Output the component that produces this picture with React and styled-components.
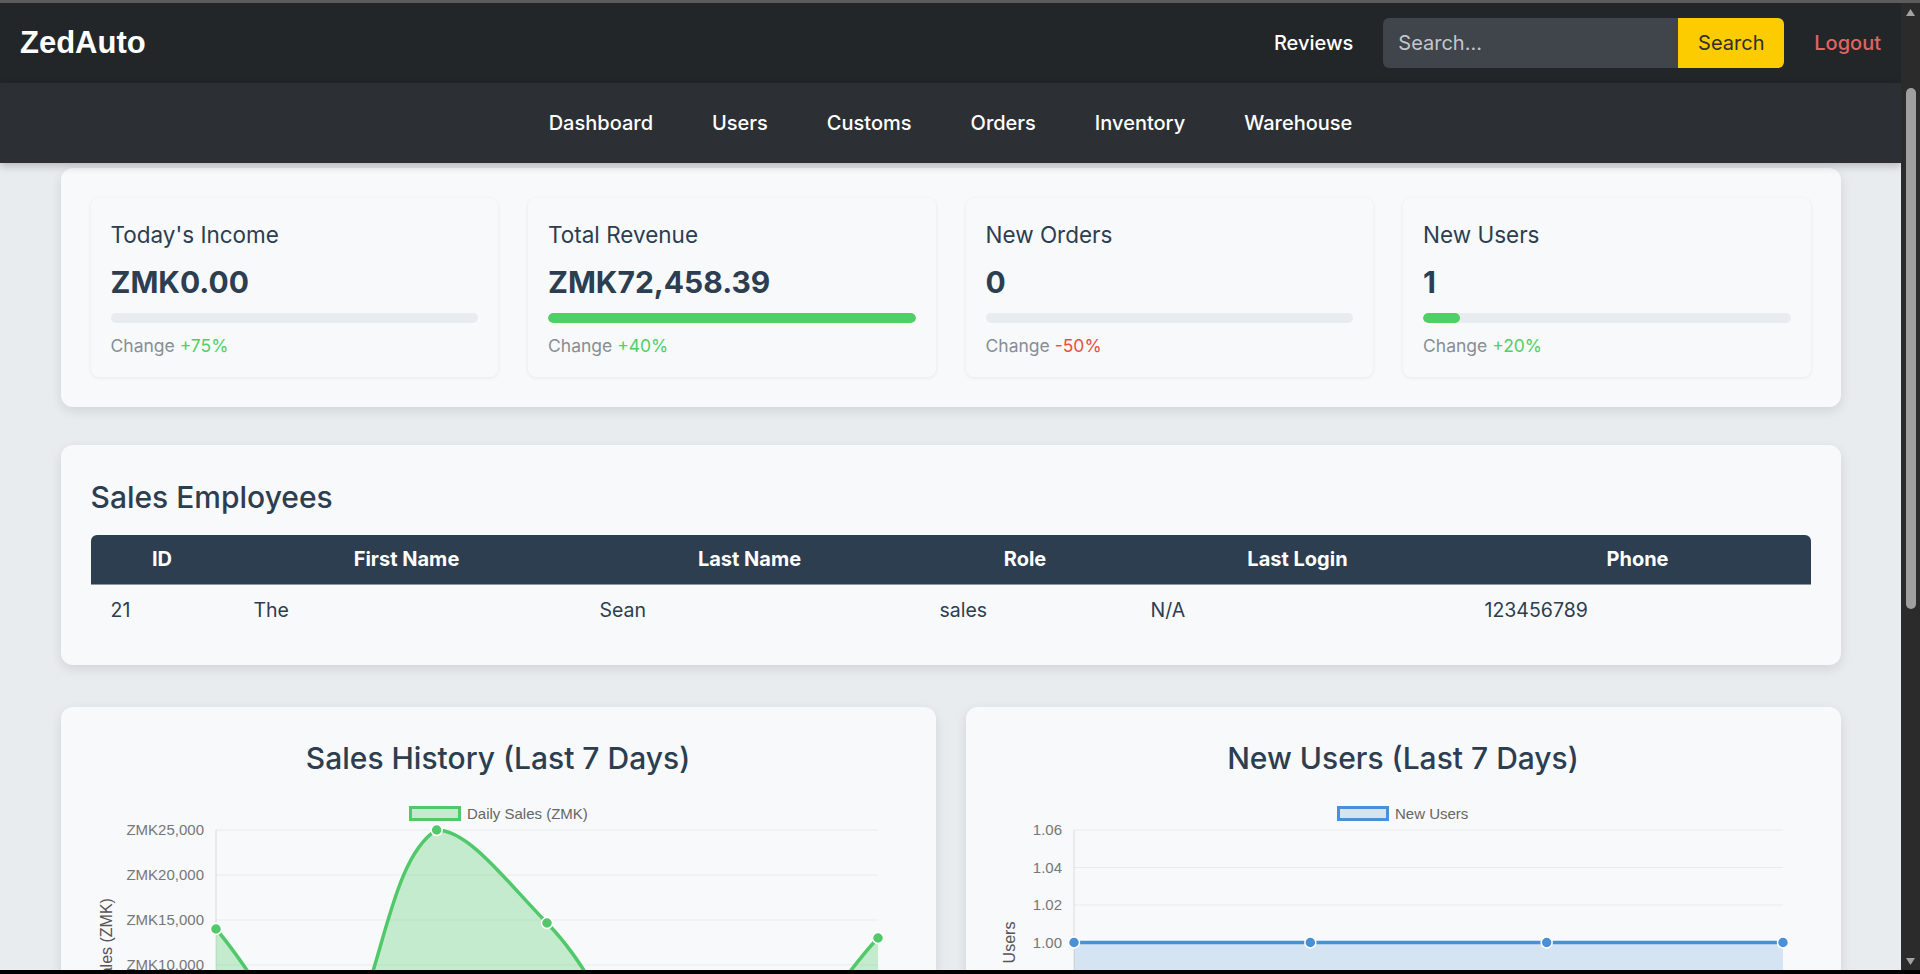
import React from 'react'
import styled, { createGlobalStyle, css } from 'styled-components'

const GlobalStyle = createGlobalStyle`
  * { box-sizing: border-box; }
  html, body {
    margin: 0;
    height: 100%;
    overflow: hidden;
  }
  body {
    font-family: Inter, "Noto Sans", sans-serif;
    background: #000;
  }
  #root { height: 100%; }
`

const Frame = styled.div`
  height: 100vh;
  display: flex;
  flex-direction: column;
`
const TopLine = styled.div`
  height: 3px;
  background: #5c5c5c;
  flex-shrink: 0;
`
const BottomLine = styled.div`
  height: 4px;
  background: #000;
  flex-shrink: 0;
`
const Middle = styled.div`
  flex: 1;
  min-height: 0;
  display: flex;
`
const Viewport = styled.div`
  flex: 1;
  overflow: hidden;
  background: #e9ecef;
`

/* fake window scrollbar */
const Rail = styled.div`
  width: 19px;
  background: #2b2b2b;
  display: flex;
  flex-direction: column;
  align-items: center;
  flex-shrink: 0;
`
const RailArrow = styled.div`
  height: 18px;
  display: flex;
  align-items: center;
  justify-content: center;
`
const RailTrack = styled.div`
  flex: 1;
  display: flex;
  flex-direction: column;
  align-items: center;
`
const Thumb = styled.div`
  width: 10px;
  border-radius: 5px;
  background: #9f9f9f;
  margin-top: 67px;
  height: 521px;
`

const Header = styled.header`
  height: 80px;
  background: #232629;
  display: flex;
  align-items: center;
  justify-content: space-between;
  padding: 0 20px;
`
const Logo = styled.div`
  font-family: "Liberation Sans", Arial, sans-serif;
  font-weight: 700;
  font-size: 31px;
  color: #fff;
`
const HeaderRight = styled.div`
  display: flex;
  align-items: center;
  gap: 30px;
`
const HeaderLink = styled.a`
  font-size: 20px;
  font-weight: 500;
  color: ${(p) => (p.danger ? '#e06464' : '#fff')};
  text-decoration: none;
`
const SearchForm = styled.form`
  display: flex;
  height: 50px;
  margin: 0;
`
const SearchInput = styled.input`
  width: 295px;
  height: 100%;
  border: none;
  outline: none;
  background: #40444b;
  color: #fff;
  font-family: inherit;
  font-size: 20px;
  padding: 0 15px;
  border-radius: 6px 0 0 6px;
  &::placeholder { color: #c2c6cd; }
`
const SearchButton = styled.button`
  width: 106px;
  height: 100%;
  border: none;
  background: #fccb00;
  color: #2f2f2f;
  font-family: inherit;
  font-size: 20px;
  border-radius: 0 6px 6px 0;
`

const Nav = styled.nav`
  height: 80px;
  background: #2c2f33;
  display: flex;
  align-items: center;
  justify-content: center;
  gap: 59px;
  position: relative;
  z-index: 1;
  box-shadow: 0 3px 8px rgba(0, 0, 0, 0.22);
`
const NavLink = styled.a`
  font-size: 20px;
  font-weight: 500;
  color: #fff;
  text-decoration: none;
`

const Content = styled.main`
  max-width: 1780px;
  margin: 0 auto;
  padding-top: 5px;
`
const Panel = styled.section`
  background: #f8f9fa;
  border-radius: 12px;
  box-shadow: 0 4px 12px rgba(0, 0, 0, 0.1);
  padding: ${(p) => p.pad || '30px'};
  margin-bottom: ${(p) => p.gap || '0'};
`
const StatsGrid = styled.div`
  display: grid;
  grid-template-columns: repeat(4, 1fr);
  gap: 30px;
`
const StatCard = styled.div`
  background: #f8f9fa;
  border-radius: 8px;
  box-shadow: 0 1px 4px rgba(0, 0, 0, 0.07);
  padding: 23px 20px 20px;
`
const StatTitle = styled.div`
  font-size: 22.5px;
  line-height: 28px;
  color: #2c3e50;
`
const StatValue = styled.div`
  font-size: 30px;
  line-height: 36px;
  font-weight: 700;
  color: #2c3e50;
  margin-top: 15px;
`
const Bar = styled.div`
  height: 10px;
  border-radius: 5px;
  background: #e9ecef;
  margin-top: 13px;
  overflow: hidden;
`
const BarFill = styled.div`
  height: 100%;
  border-radius: 5px;
  background: #51cf66;
`
const Change = styled.div`
  font-size: 17.5px;
  line-height: 22px;
  color: #868e96;
  margin-top: 12px;
`
const Delta = styled.span`
  color: ${(p) => (p.up ? '#51cf66' : '#e8503a')};
`

const SectionTitle = styled.h2`
  margin: 4px 0 20px;
  font-size: 30px;
  line-height: 36px;
  font-weight: 500;
  color: #2c3e50;
  ${(p) =>
    p.center &&
    css`
      text-align: center;
      margin: 0 0 13px;
    `}
`
const Table = styled.table`
  width: 100%;
  border-collapse: separate;
  border-spacing: 0;
  table-layout: fixed;
`
const Th = styled.th`
  background: #2c3e50;
  color: #fff;
  font-size: 20px;
  line-height: 25px;
  font-weight: 700;
  padding: 12px 20px;
  text-align: center;
  border-bottom: 1px solid #8d97a1;
  &:first-child { border-top-left-radius: 6px; }
  &:last-child { border-top-right-radius: 6px; }
`
const Td = styled.td`
  font-size: 19.5px;
  line-height: 24px;
  color: #2c3e50;
  padding: 13px 20px;
  text-align: left;
`

const ChartsRow = styled.div`
  display: grid;
  grid-template-columns: 1fr 1fr;
  gap: 30px;
`
const ChartSvg = styled.svg`
  display: block;
  width: 100%;
  height: 300px;
  font-family: "Liberation Sans", Arial, sans-serif;
`

const stats = [
  { title: "Today's Income", value: 'ZMK0.00', fill: 0, change: '+75%', up: true },
  { title: 'Total Revenue', value: 'ZMK72,458.39', fill: 100, change: '+40%', up: true },
  { title: 'New Orders', value: '0', fill: 0, change: '-50%', up: false },
  { title: 'New Users', value: '1', fill: 10, change: '+20%', up: true }
]

const navItems = ['Dashboard', 'Users', 'Customs', 'Orders', 'Inventory', 'Warehouse']
const columns = ['ID', 'First Name', 'Last Name', 'Role', 'Last Login', 'Phone']
const colWidths = [143, 346, 340, 211, 334, 346]
const employees = [{ id: 21, first: 'The', last: 'Sean', role: 'sales', login: 'N/A', phone: '123456789' }]

// chart.js style spline (tension, control points capped to the area)
const splinePath = (pts, t, minY, maxY) => {
  const clamp = (y) => Math.max(minY, Math.min(maxY, y))
  const cps = pts.map((p, i) => {
    const prev = pts[i - 1] || p
    const next = pts[i + 1] || p
    const d01 = Math.hypot(p.x - prev.x, p.y - prev.y)
    const d12 = Math.hypot(next.x - p.x, next.y - p.y)
    const s01 = d01 / (d01 + d12) || 0
    const s12 = d12 / (d01 + d12) || 0
    return {
      a: { x: p.x - t * s01 * (next.x - prev.x), y: clamp(p.y - t * s01 * (next.y - prev.y)) },
      b: { x: p.x + t * s12 * (next.x - prev.x), y: clamp(p.y + t * s12 * (next.y - prev.y)) }
    }
  })
  let d = `M${pts[0].x},${pts[0].y}`
  for (let i = 1; i < pts.length; i++) {
    d += ` C${cps[i - 1].b.x},${cps[i - 1].b.y} ${cps[i].a.x},${cps[i].a.y} ${pts[i].x},${pts[i].y}`
  }
  return d
}

const LineChart = ({ data, min, max, ticks, left, legend, legendX, axisTitle, titleX, color, fill, curve }) => {
  const top = 41
  const bottom = 266
  const right = 787
  const step = (right - left) / (data.length - 1)
  const toY = (v) => bottom - ((v - min) / (max - min)) * (bottom - top)
  const pts = data.map((v, i) => ({ x: left + i * step, y: toY(v) }))
  const line = curve
    ? splinePath(pts, 0.4, top, bottom)
    : pts.map((p, i) => `${i ? 'L' : 'M'}${p.x},${p.y}`).join(' ')
  const area = `${line} L${pts[pts.length - 1].x},${bottom} L${pts[0].x},${bottom} Z`
  return (
    <ChartSvg viewBox='0 0 815 300' preserveAspectRatio='xMinYMin meet'>
      <rect x={legendX + 1.5} y='18.5' width='49' height='12' fill={fill} stroke={color} strokeWidth='3' />
      <text x={legendX + 58} y='30' fontSize='15' fill='#666'>{legend}</text>
      {ticks.map((tk) => (
        <g key={tk.label}>
          <line x1={left} x2={right} y1={toY(tk.v)} y2={toY(tk.v)} stroke='rgba(0,0,0,0.06)' />
          <text x={left - 12} y={toY(tk.v) + 5} fontSize='15' fill='#777' textAnchor='end'>{tk.label}</text>
        </g>
      ))}
      <line x1={left} x2={left} y1={top} y2={bottom} stroke='rgba(0,0,0,0.12)' />
      <path d={area} fill={fill} />
      <path d={line} fill='none' stroke={color} strokeWidth='3.5' />
      {pts.map((p, i) => (
        <circle key={i} cx={p.x} cy={p.y} r='5.5' fill={color} stroke='#fff' strokeWidth='1.5' />
      ))}
      <text
        transform={`translate(${titleX}, ${(top + bottom) / 2}) rotate(-90)`}
        fontSize='16'
        fill='#555'
        textAnchor='middle'
        dominantBaseline='central'
      >
        {axisTitle}
      </text>
    </ChartSvg>
  )
}

const salesTicks = [25000, 20000, 15000, 10000, 5000, 0].map((v) => ({
  v,
  label: `ZMK${v.toLocaleString('en-US')}`
}))
const userTicks = [1.06, 1.04, 1.02, 1.0, 0.98, 0.96, 0.94].map((v) => ({ v, label: v.toFixed(2) }))

const ArrowIcon = ({ down }) => (
  <svg width='9' height='7' viewBox='0 0 9 7'>
    <polygon points={down ? '0,0 9,0 4.5,7' : '0,7 9,7 4.5,0'} fill='#a3a3a3' />
  </svg>
)

const App = () => {
  return (
    <Frame>
      <GlobalStyle />
      <TopLine />
      <Middle>
        <Viewport>
          <Header>
            <Logo>ZedAuto</Logo>
            <HeaderRight>
              <HeaderLink href='#'>Reviews</HeaderLink>
              <SearchForm onSubmit={(e) => e.preventDefault()}>
                <SearchInput placeholder='Search...' />
                <SearchButton type='submit'>Search</SearchButton>
              </SearchForm>
              <HeaderLink href='#' danger>Logout</HeaderLink>
            </HeaderRight>
          </Header>
          <Nav>
            {navItems.map((n) => (
              <NavLink key={n} href='#'>{n}</NavLink>
            ))}
          </Nav>
          <Content>
            <Panel gap='38px'>
              <StatsGrid>
                {stats.map((s) => (
                  <StatCard key={s.title}>
                    <StatTitle>{s.title}</StatTitle>
                    <StatValue>{s.value}</StatValue>
                    <Bar>
                      <BarFill style={{ width: `${s.fill}%` }} />
                    </Bar>
                    <Change>
                      Change <Delta up={s.up}>{s.change}</Delta>
                    </Change>
                  </StatCard>
                ))}
              </StatsGrid>
            </Panel>
            <Panel gap='42px'>
              <SectionTitle>Sales Employees</SectionTitle>
              <Table>
                <colgroup>
                  {colWidths.map((w, i) => (
                    <col key={i} style={{ width: w }} />
                  ))}
                </colgroup>
                <thead>
                  <tr>
                    {columns.map((c) => (
                      <Th key={c}>{c}</Th>
                    ))}
                  </tr>
                </thead>
                <tbody>
                  {employees.map((e) => (
                    <tr key={e.id}>
                      <Td>{e.id}</Td>
                      <Td>{e.first}</Td>
                      <Td>{e.last}</Td>
                      <Td>{e.role}</Td>
                      <Td>{e.login}</Td>
                      <Td>{e.phone}</Td>
                    </tr>
                  ))}
                </tbody>
              </Table>
            </Panel>
            <ChartsRow>
              <Panel pad='32.5px 30px 30px'>
                <SectionTitle center>Sales History (Last 7 Days)</SectionTitle>
                <LineChart
                  data={[14000, 0, 25000, 14667, 0, 0, 13000]}
                  min={0}
                  max={25000}
                  ticks={salesTicks}
                  left={125}
                  legend='Daily Sales (ZMK)'
                  legendX={318}
                  axisTitle='Sales (ZMK)'
                  titleX={15}
                  color='#51c96a'
                  fill='rgba(81, 201, 106, 0.3)'
                  curve
                />
              </Panel>
              <Panel pad='32.5px 30px 30px'>
                <SectionTitle center>New Users (Last 7 Days)</SectionTitle>
                <LineChart
                  data={[1, 1, 1, 1]}
                  min={0.94}
                  max={1.06}
                  ticks={userTicks}
                  left={78}
                  legend='New Users'
                  legendX={341}
                  axisTitle='Users'
                  titleX={13}
                  color='#4a90d9'
                  fill='rgba(74, 144, 217, 0.2)'
                />
              </Panel>
            </ChartsRow>
          </Content>
        </Viewport>
        <Rail>
          <RailArrow>
            <ArrowIcon />
          </RailArrow>
          <RailTrack>
            <Thumb />
          </RailTrack>
          <RailArrow>
            <ArrowIcon down />
          </RailArrow>
        </Rail>
      </Middle>
      <BottomLine />
    </Frame>
  )
}

export default App
